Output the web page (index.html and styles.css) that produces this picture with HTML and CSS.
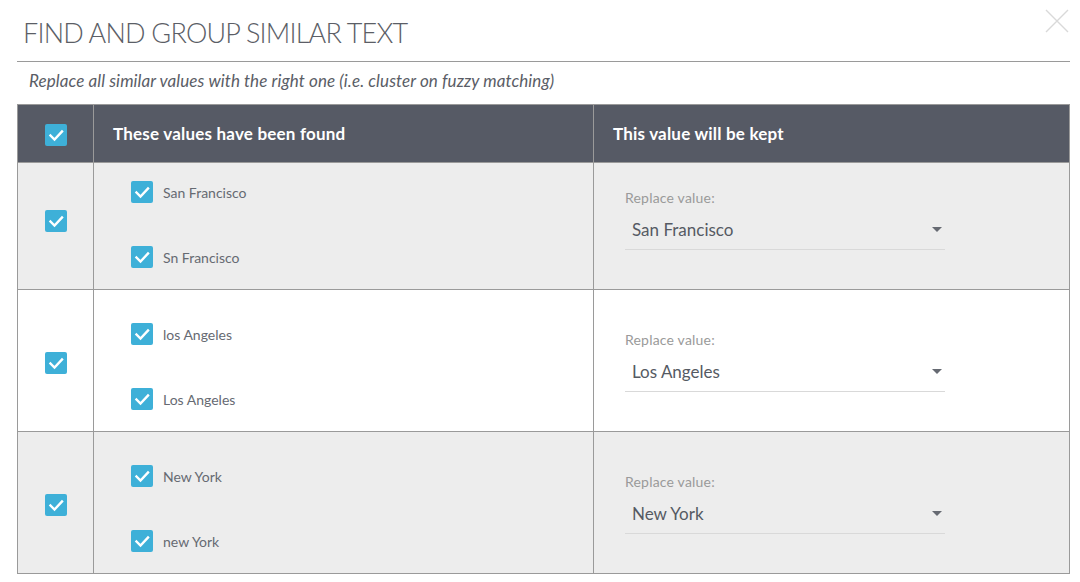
FILE: index.html
```html
<!DOCTYPE html>
<html lang="en">
<head>
<meta charset="utf-8">
<title>Find and group similar text</title>
<link rel="stylesheet" href="styles.css">
</head>
<body>
<div class="dialog">
  <header class="dialog-head">
    <h1 class="title">FIND AND GROUP SIMILAR TEXT</h1>
    <button class="close" aria-label="Close">
      <svg width="24" height="24" viewBox="0 0 24 24"><path d="M1 1 L23 23 M23 1 L1 23" stroke="#d9d9d9" stroke-width="1.4" fill="none"/></svg>
    </button>
  </header>
  <p class="subtitle">Replace all similar values with the right one (i.e. cluster on fuzzy matching)</p>

  <div class="table">
    <div class="row row-head">
      <div class="cell cell-check"><span class="cb"><svg viewBox="0 0 22 22"><path d="M5.5 11.5 L9.5 15.5 L17 7.5"/></svg></span></div>
      <div class="cell cell-head">These values have been found</div>
      <div class="cell cell-head">This value will be kept</div>
    </div>

    <div class="row row-body row-grey row-first">
      <div class="cell cell-check"><span class="cb"><svg viewBox="0 0 22 22"><path d="M5.5 11.5 L9.5 15.5 L17 7.5"/></svg></span></div>
      <div class="cell cell-values">
        <label class="item"><span class="cb"><svg viewBox="0 0 22 22"><path d="M5.5 11.5 L9.5 15.5 L17 7.5"/></svg></span>San Francisco</label>
        <label class="item"><span class="cb"><svg viewBox="0 0 22 22"><path d="M5.5 11.5 L9.5 15.5 L17 7.5"/></svg></span>Sn Francisco</label>
      </div>
      <div class="cell cell-keep">
        <div class="field">
          <span class="field-label">Replace value:</span>
          <div class="select"><span class="select-value">San Francisco</span><span class="caret"></span></div>
        </div>
      </div>
    </div>

    <div class="row row-body">
      <div class="cell cell-check"><span class="cb"><svg viewBox="0 0 22 22"><path d="M5.5 11.5 L9.5 15.5 L17 7.5"/></svg></span></div>
      <div class="cell cell-values">
        <label class="item"><span class="cb"><svg viewBox="0 0 22 22"><path d="M5.5 11.5 L9.5 15.5 L17 7.5"/></svg></span>los Angeles</label>
        <label class="item"><span class="cb"><svg viewBox="0 0 22 22"><path d="M5.5 11.5 L9.5 15.5 L17 7.5"/></svg></span>Los Angeles</label>
      </div>
      <div class="cell cell-keep">
        <div class="field">
          <span class="field-label">Replace value:</span>
          <div class="select"><span class="select-value">Los Angeles</span><span class="caret"></span></div>
        </div>
      </div>
    </div>

    <div class="row row-body row-grey">
      <div class="cell cell-check"><span class="cb"><svg viewBox="0 0 22 22"><path d="M5.5 11.5 L9.5 15.5 L17 7.5"/></svg></span></div>
      <div class="cell cell-values">
        <label class="item"><span class="cb"><svg viewBox="0 0 22 22"><path d="M5.5 11.5 L9.5 15.5 L17 7.5"/></svg></span>New York</label>
        <label class="item"><span class="cb"><svg viewBox="0 0 22 22"><path d="M5.5 11.5 L9.5 15.5 L17 7.5"/></svg></span>new York</label>
      </div>
      <div class="cell cell-keep">
        <div class="field">
          <span class="field-label">Replace value:</span>
          <div class="select"><span class="select-value">New York</span><span class="caret"></span></div>
        </div>
      </div>
    </div>
  </div>
</div>
</body>
</html>
```

FILE: styles.css
```css
* { box-sizing: border-box; }

html, body {
  margin: 0;
  padding: 0;
  background: #ffffff;
}

body {
  font-family: "Source Sans Pro", Lato, "Noto Sans", sans-serif;
  color: #555a63;
}

.dialog {
  padding: 0 10px 0 17px;
}

.dialog-head {
  height: 62px;
  display: flex;
  justify-content: space-between;
  align-items: flex-start;
  border-bottom: 1px solid #9a9a9a;
}

.title {
  margin: 16px 0 0 6px;
  font-size: 27px;
  line-height: 34px;
  font-weight: 300;
  color: #5b5e66;
  letter-spacing: -0.8px;
}

.close {
  margin: 9px 1px 0 0;
  padding: 0;
  border: 0;
  background: none;
  width: 24px;
  height: 24px;
}
.close svg { display: block; }

.subtitle {
  margin: 0;
  padding: 9px 0 0 12px;
  height: 42px;
  font-size: 17px;
  line-height: 20px;
  font-style: italic;
  color: #5a5d66;
  letter-spacing: 0.1px;
}

.table {
  border: 1px solid #9a9a9a;
}

.row {
  display: grid;
  grid-template-columns: 75px 500px 1fr;
}

.row-body { border-top: 1px solid #9a9a9a; }
.row-grey { background: #ededed; }

.cell + .cell { border-left: 1px solid #9a9a9a; }

.row-head {
  background: #565a65;
  height: 57px;
}

.cell-check {
  display: flex;
  justify-content: center;
}
.row-head .cell-check { align-items: center; padding-top: 3px; }
.row-body .cell-check { align-items: flex-end; padding-bottom: 57px; }

.cell-head {
  display: flex;
  align-items: center;
  padding: 0 0 1px 19px;
  color: #ffffff;
  font-weight: 700;
  font-size: 17px;
  letter-spacing: 0.2px;
}

.cb {
  width: 22px;
  height: 22px;
  border-radius: 2px;
  background: #3eb0d8;
  display: inline-flex;
  flex: none;
}
.cb svg {
  width: 22px;
  height: 22px;
  fill: none;
  stroke: #ffffff;
  stroke-width: 2.4;
  stroke-linecap: square;
}

.cell-values {
  display: flex;
  flex-direction: column;
  gap: 43px;
  padding: 33px 0 21px 37px;
}
.row-first .cell-values { padding-top: 18px; }

.item {
  display: flex;
  align-items: center;
  gap: 10px;
  font-size: 14px;
  color: #666a72;
  height: 22px;
}

.cell-keep {
  display: flex;
  align-items: flex-end;
  padding: 0 0 39px 31px;
}

.field {
  width: 320px;
  display: flex;
  flex-direction: column;
}

.field-label {
  font-size: 14px;
  line-height: 18px;
  margin-bottom: 5px;
  color: #9a9a9a;
  letter-spacing: 0.2px;
}

.select {
  display: flex;
  align-items: center;
  justify-content: space-between;
  height: 38px;
  padding: 0 3px 2px 7px;
  border-bottom: 1px solid #d9d9d9;
}

.select-value {
  font-size: 17px;
  color: #555a63;
}

.caret {
  width: 0;
  height: 0;
  border-left: 5px solid transparent;
  border-right: 5px solid transparent;
  border-top: 5px solid #666a72;
}
```
